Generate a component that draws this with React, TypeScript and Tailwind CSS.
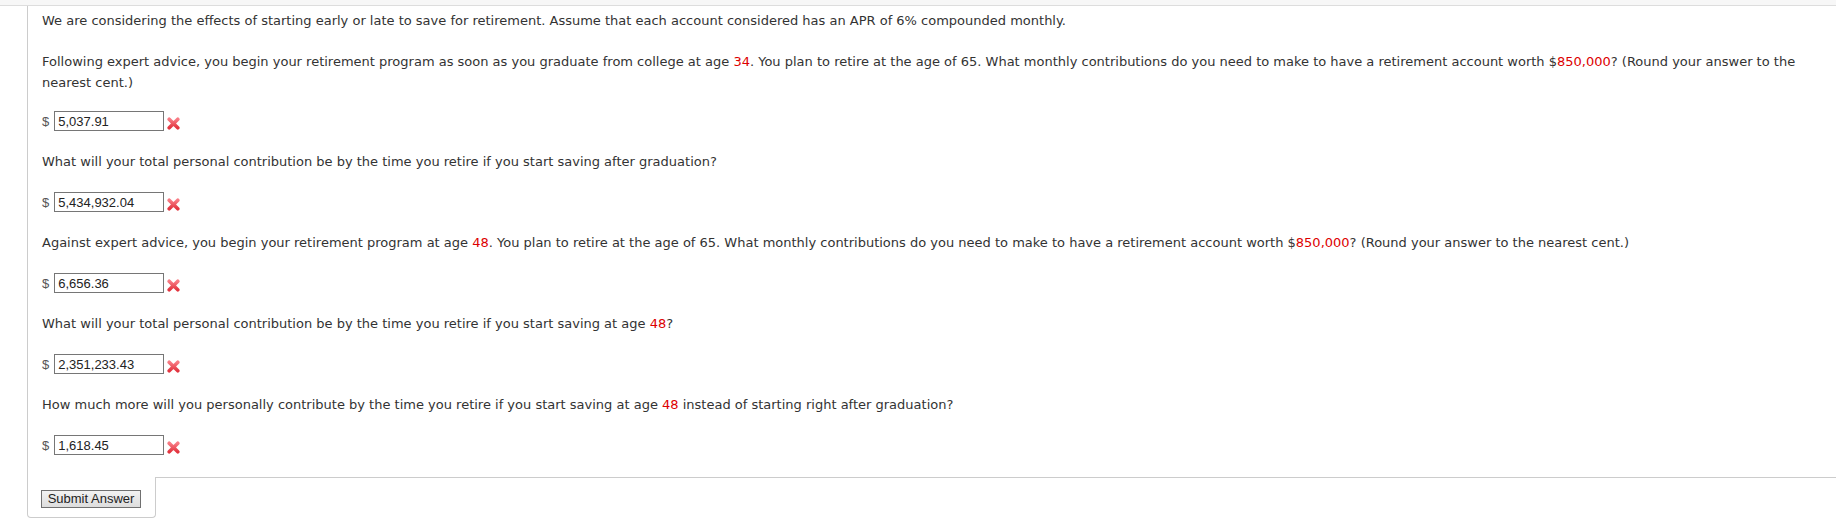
// Retirement savings question - WebAssign style answer panel

const Red = ({ children }: { children: React.ReactNode }) => (
  <span className="text-[#dd0000]">{children}</span>
);

function WrongMark() {
  return (
    <svg width="13" height="13" viewBox="0 0 13 13" className="ml-[3px] mt-[4px] shrink-0">
      <defs>
        <linearGradient id="xg" x1="0" y1="0" x2="0" y2="1">
          <stop offset="0" stopColor="#f87b84" />
          <stop offset="1" stopColor="#e2343f" />
        </linearGradient>
      </defs>
      <path d="M2.2 2.2 L10.8 10.8 M10.8 2.2 L2.2 10.8" stroke="url(#xg)" strokeWidth="3.6" strokeLinecap="round" />
    </svg>
  );
}

function AnswerRow({ value, className = '' }: { value: string; className?: string }) {
  return (
    <div className={`flex h-5 items-center ${className}`}>
      <span className="mr-[5px] font-['Liberation_Sans',Arial,sans-serif] text-[13px] text-[#555]">$</span>
      <input
        readOnly
        value={value}
        className="h-5 w-[110px] border border-[#767676] bg-white px-[3px] font-['Liberation_Sans',Arial,sans-serif] text-[13px] text-[#222] outline-none"
      />
      <WrongMark />
    </div>
  );
}

export default function App() {
  return (
    <div className="min-h-[526px] bg-white font-['DejaVu_Sans',Verdana,sans-serif] text-[13px] leading-[21px] text-[#333]">
      {/* Top strip */}
      <div className="h-[6px] border-b border-[#dddddd] bg-[#f7f7f7]" />

      <div className="ml-[27px]">
        {/* Question panel */}
        <div className="flex flex-col border-l border-[#cccccc] pb-[22px] pl-[14px] pr-[30px] pt-[4px]">
          <p>
            We are considering the effects of starting early or late to save for retirement. Assume that each account
            considered has an APR of 6% compounded monthly.
          </p>
          <p className="mt-5">
            Following expert advice, you begin your retirement program as soon as you graduate from college at age{' '}
            <Red>34</Red>. You plan to retire at the age of 65. What monthly contributions do you need to make to have a
            retirement account worth $<Red>850,000</Red>? (Round your answer to the nearest cent.)
          </p>
          <AnswerRow value="5,037.91" className="mt-[18px]" />

          <p className="mt-5">
            What will your total personal contribution be by the time you retire if you start saving after graduation?
          </p>
          <AnswerRow value="5,434,932.04" className="mt-5" />

          <p className="mt-5">
            Against expert advice, you begin your retirement program at age <Red>48</Red>. You plan to retire at the age
            of 65. What monthly contributions do you need to make to have a retirement account worth $
            <Red>850,000</Red>? (Round your answer to the nearest cent.)
          </p>
          <AnswerRow value="6,656.36" className="mt-5" />

          <p className="mt-5">
            What will your total personal contribution be by the time you retire if you start saving at age{' '}
            <Red>48</Red>?
          </p>
          <AnswerRow value="2,351,233.43" className="mt-5" />

          <p className="mt-5">
            How much more will you personally contribute by the time you retire if you start saving at age{' '}
            <Red>48</Red> instead of starting right after graduation?
          </p>
          <AnswerRow value="1,618.45" className="mt-5" />
        </div>

        {/* Submit tab */}
        <div className="flex">
          <div className="h-[41px] w-[129px] rounded-b-[4px] border-x border-b border-[#cccccc] pl-[13px] pt-[11px]">
            <button className="h-[18px] w-[100px] border border-[#707070] bg-gradient-to-b from-[#f2f2f2] to-[#dddddd] font-['Liberation_Sans',Arial,sans-serif] text-[13px] leading-[16px] text-[#222]">
              Submit Answer
            </button>
          </div>
          <div className="flex-1 border-t border-[#cccccc]" />
        </div>
      </div>
    </div>
  );
}
